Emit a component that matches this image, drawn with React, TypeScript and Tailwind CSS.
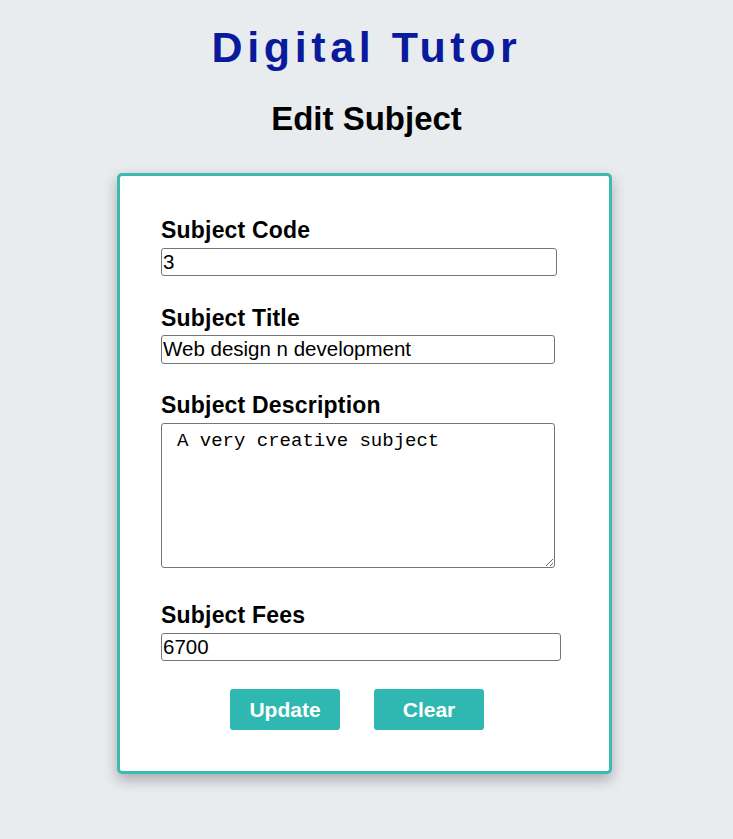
const EditSubject = () => {
  return (
    <div className="min-h-screen bg-[#e9ecef] pt-[22px] font-['Liberation_Sans',Arial,sans-serif] text-black">
      <h1 className="text-center text-[43px] font-bold leading-[50px] tracking-[4.6px] text-[#0a1a9c]">
        Digital Tutor
      </h1>
      <h2 className="mt-[28px] text-center text-[33px] font-bold leading-[37px]">Edit Subject</h2>

      <div className="mt-[36px] pr-[4px]">
        <form className="mx-auto w-[495px] rounded-[5px] border-[3px] border-[#3db8b2] bg-white pt-[41px] pb-[41px] pl-[41px] shadow-[0_6px_14px_rgba(0,0,0,0.28)]">
          <label className="block text-[23px] font-bold leading-[26px] tracking-[0.2px]">Subject Code</label>
          <input
            defaultValue="3"
            className="mt-[5px] block h-[28px] w-[396px] rounded-[3px] border border-[#767676] px-[1px] text-[20.5px] outline-none"
          />

          <label className="mt-[29px] block text-[23px] font-bold leading-[26px] tracking-[0.2px]">Subject Title</label>
          <input
            defaultValue="Web design n development"
            className="mt-[4px] block h-[29px] w-[394px] rounded-[3px] border border-[#767676] px-[1px] text-[20.5px] outline-none"
          />

          <label className="mt-[28px] block text-[23px] font-bold leading-[26px] tracking-[0.2px]">Subject Description</label>
          <textarea
            defaultValue="A very creative subject"
            className="mt-[5px] block h-[145px] w-[394px] rounded-[3px] border border-[#767676] pt-[6px] pl-[15px] font-['Liberation_Mono',monospace] text-[19px] leading-[22px] outline-none"
          />

          <label className="mt-[34px] block text-[23px] font-bold leading-[26px] tracking-[0.2px]">Subject Fees</label>
          <input
            defaultValue="6700"
            className="mt-[5px] block h-[28px] w-[400px] rounded-[3px] border border-[#767676] px-[1px] text-[20.5px] outline-none"
          />

          <div className="mt-[28px] ml-[69px] flex gap-[34px]">
            <button type="button" className="h-[41px] w-[110px] rounded-[3px] bg-[#2fb8b1] text-[21px] font-bold text-white">
              Update
            </button>
            <button type="button" className="h-[41px] w-[110px] rounded-[3px] bg-[#2fb8b1] text-[21px] font-bold text-white">
              Clear
            </button>
          </div>
        </form>
      </div>
    </div>
  );
};

export default EditSubject;
